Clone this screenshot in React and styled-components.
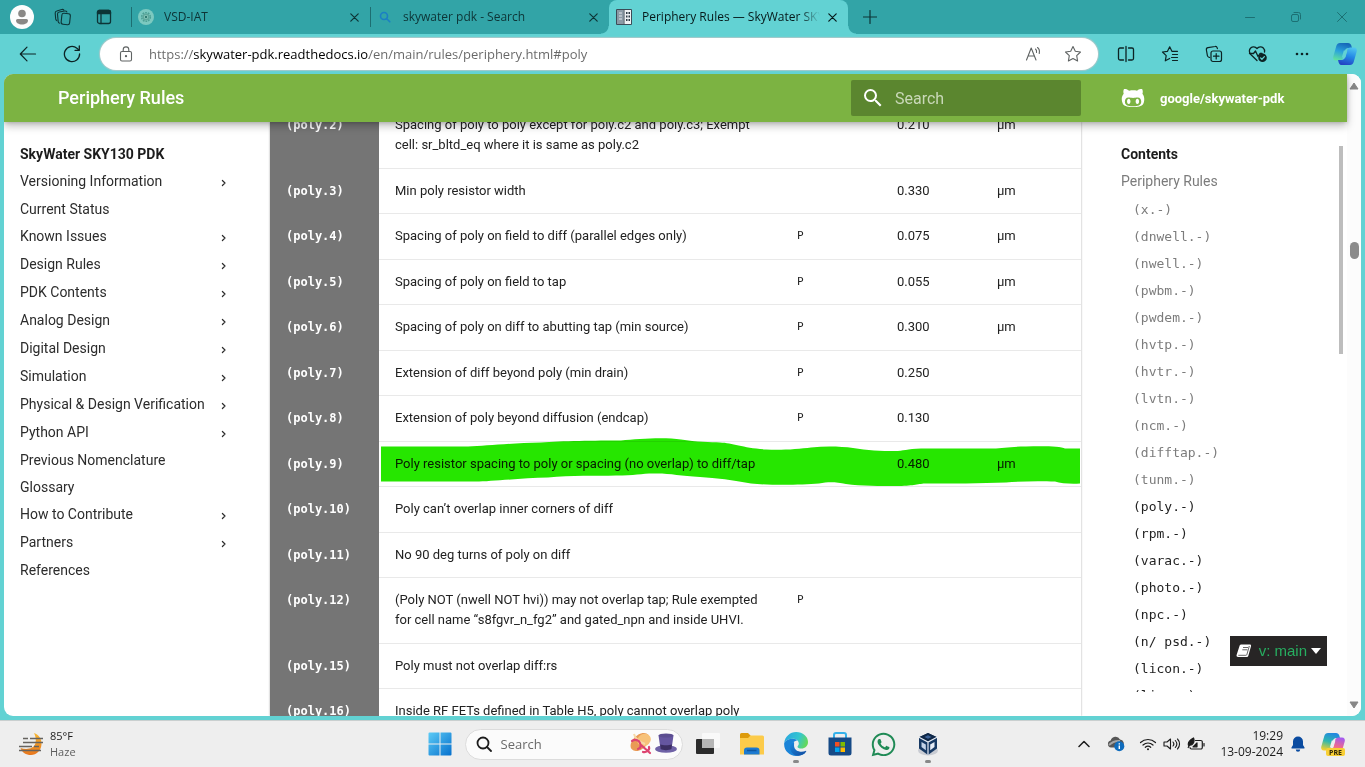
import React from "react";
import styled, { createGlobalStyle, css } from "styled-components";
import { FaGithubAlt, FaWhatsapp } from "react-icons/fa";
import { MdSearch } from "react-icons/md";

const chromeFont = '"Open Sans", "Noto Sans", sans-serif';
const docFont = 'Roboto, "Liberation Sans", sans-serif';
const monoFont = '"DejaVu Sans Mono", "Liberation Mono", monospace';

const Global = createGlobalStyle`
  *, *::before, *::after { box-sizing: border-box; }
  body { margin: 0; font-family: ${docFont}; background: #62d2d3; }
  button, input { font: inherit; color: inherit; }
  a { color: inherit; text-decoration: none; }
  ul { list-style: none; margin: 0; padding: 0; }
  svg { display: block; flex: none; }
`;

const Desktop = styled.div`
  display: flex;
  flex-direction: column;
  height: 100vh;
  overflow: hidden;
`;

/* ---------- browser chrome ---------- */

const TabStrip = styled.header`
  display: flex;
  flex: none;
  height: 34px;
  background: #32a4a7;
  color: #0d3436;
  font: 12px/16px ${chromeFont};
`;

const PlainButton = styled.button`
  display: flex;
  align-items: center;
  justify-content: center;
  flex: none;
  width: ${(p) => p.$w || 44}px;
  padding: 0;
  border: 0;
  background: none;
`;

const WindowButton = styled(PlainButton)`
  width: 46px;
  color: #1c7073;
`;

const Tabs = styled.div`
  display: flex;
  flex: 1;
  min-width: 0;
  padding-left: 4px;
`;

const Tab = styled.div`
  position: relative;
  display: flex;
  align-items: center;
  flex: 0 1 239px;
  min-width: 0;
  padding: 0 4px 0 7px;

  ${(p) =>
    p.$active
      ? css`
          color: #06191a;
          background: #62d2d3;
          border-radius: 8px 8px 0 0;
          &::before,
          &::after {
            content: "";
            position: absolute;
            bottom: 0;
            width: 8px;
            height: 8px;
          }
          &::before {
            right: 100%;
            background: radial-gradient(circle at 0 0, transparent 7px, #62d2d3 8px);
          }
          &::after {
            left: 100%;
            background: radial-gradient(circle at 100% 0, transparent 7px, #62d2d3 8px);
          }
        `
      : css`
          &::before {
            content: "";
            position: absolute;
            left: 0;
            top: 7px;
            width: 1px;
            height: 20px;
            background: #1d6e71;
          }
        `}
`;

const TabTitle = styled.span`
  flex: 1;
  min-width: 0;
  margin-left: 10px;
  overflow: hidden;
  white-space: nowrap;
  mask-image: linear-gradient(90deg, #000 calc(100% - 20px), transparent);
`;

const Spacer = styled.div`
  flex: 1;
`;

const ToolBar = styled.div`
  display: flex;
  flex: none;
  height: 40px;
  padding: 4px 0 4px 6px;
  background: #62d2d3;
  color: #0c2324;
`;

const AddressBar = styled.form`
  display: flex;
  align-items: center;
  flex: 1;
  min-width: 0;
  margin: 0 6px;
  padding: 0 5px 0 6px;
  border-radius: 16px;
  background: #fff;
  box-shadow: 0 0 1px 1px #a9c9ca;
  color: #5f6363;
`;

const AddressInput = styled.input`
  flex: 1;
  min-width: 0;
  padding: 0;
  margin-left: 3px;
  border: 0;
  outline: 0;
  font: 13px/20px ${chromeFont};
  color: #666;
  background: linear-gradient(90deg, #666 45px, #000 45px, #000 220px, #666 220px);
  background-clip: text;
  -webkit-text-fill-color: transparent;
`;

/* ---------- page ---------- */

const Viewport = styled.div`
  position: relative;
  display: flex;
  flex: 1;
  min-height: 0;
  margin: 0 4px 4px;
  border-radius: 9px;
  overflow: hidden;
  background: #fff;
`;

const Page = styled.div`
  display: flex;
  flex-direction: column;
  flex: 1;
  min-width: 0;
`;

const PageHeader = styled.header`
  position: relative;
  z-index: 1;
  display: flex;
  align-items: center;
  flex: none;
  height: 48px;
  padding-left: 54px;
  background: #7cb342;
  color: #fff;
  box-shadow: 0 0 4px rgba(0, 0, 0, 0.2), 0 4px 8px rgba(0, 0, 0, 0.25);
`;

const PageTitle = styled.a`
  flex: 1;
  font-size: 18px;
  font-weight: 500;
  line-height: 24px;
`;

const SearchBox = styled.label`
  display: flex;
  align-items: center;
  width: 230px;
  height: 36px;
  padding: 0 10px;
  gap: 10px;
  border-radius: 2px;
  background: #5b862f;
  font-size: 16px;
  svg { width: 24px; height: 24px; stroke: #fff; }
`;

const SearchInput = styled.input`
  flex: 1;
  min-width: 0;
  padding: 0;
  border: 0;
  outline: 0;
  background: none;
  &::placeholder { color: #c9d8b8; opacity: 1; }
`;

const RepoLink = styled.a`
  display: flex;
  align-items: center;
  width: 266px;
  padding-left: 40px;
  gap: 15px;
  font-size: 13px;
  font-weight: 700;
`;

const Columns = styled.div`
  display: flex;
  flex: 1;
  min-height: 0;
`;

const SideNav = styled.nav`
  flex: none;
  width: 266px;
  padding: 19px 43px 0 16px;
  font-size: 14px;
  line-height: 27px;
  color: #2c2c2c;
`;

const SideTitle = styled.strong`
  display: block;
  font-weight: 700;
  color: #1c1c1c;
`;

const NavItem = styled.li`
  display: flex;
  justify-content: space-between;
  align-items: flex-start;
  height: ${(p) => (p.$branch ? 28 : 27)}px;
  white-space: nowrap;
  svg { margin-top: 11px; }
`;

const Article = styled.main`
  flex: 1;
  min-width: 0;
  overflow: hidden;
  box-shadow: 0 0 2px rgba(0, 0, 0, 0.35);
`;

const RuleTable = styled.table`
  width: 100%;
  margin-top: -20px;
  border-collapse: separate;
  border-spacing: 0;
  table-layout: fixed;
  font-size: 13px;
  line-height: 20px;
  color: #222;
`;

const Col = styled.col`
  width: ${(p) => p.$w}px;
`;

const Rule = styled.tr`
  position: relative;
  &:nth-child(even) > * { padding-bottom: 12px; }
`;

const RuleName = styled.th`
  padding: 13px 16px;
  background: #757575;
  color: #fff;
  font: 700 12px/20px ${monoFont};
  text-align: left;
  vertical-align: top;
`;

const Cell = styled.td`
  padding: 12px 16px 13px;
  border-top: 1px solid #e9e9e9;
  vertical-align: top;
`;

const FlagCell = styled(Cell)`
  font: 11px/20px ${monoFont};
`;

const Marker = styled.svg`
  position: absolute;
  left: 111px;
  top: -4px;
  width: calc(100% - 112px);
  height: 50px;
  mix-blend-mode: multiply;
  pointer-events: none;
`;

const Toc = styled.aside`
  display: flex;
  flex: none;
  width: 266px;
  padding: 0 4px 0 40px;
  margin-bottom: 24px;
  overflow: hidden;
  font-size: 14px;
  line-height: 27px;
  color: #7c7c7c;
`;

const TocBody = styled.div`
  flex: 1;
  padding-top: 19px;
`;

const TocTop = styled.a`
  display: block;
  height: 28px;
`;

const TocItem = styled.li`
  height: 27px;
  padding-left: 12px;
  font: 13px/27px ${monoFont};
  color: ${(p) => (p.$seen ? "#7c7c7c" : "#222")};
`;

const TocThumb = styled.div`
  width: 4px;
  height: 208px;
  margin-top: 24px;
  background: #bdbdbd;
`;

const ScrollRail = styled.div`
  display: flex;
  flex-direction: column;
  align-items: center;
  flex: none;
  width: 14px;
  padding: 8px 0 7px;
  background: #fcfcfc;
`;

const ScrollThumb = styled.div`
  width: 9px;
  height: 17px;
  margin-top: 152px;
  border-radius: 5px;
  background: #8b8b8b;
`;

const VersionBadge = styled.button`
  position: absolute;
  right: 34px;
  bottom: 50px;
  display: flex;
  align-items: center;
  height: 30px;
  padding: 0 6px;
  border: 0;
  background: #272525;
  color: #27ae60;
  font: 15px/20px "Liberation Sans", sans-serif;
  white-space: nowrap;
  span { margin: 0 4px 0 7px; }
`;

/* ---------- taskbar ---------- */

const TaskBar = styled.footer`
  display: grid;
  grid-template-columns: 1fr auto 1fr;
  flex: none;
  height: 47px;
  border-top: 1px solid #c9cfcf;
  background: #eee;
  color: #1c1c1c;
  font: 12px/16px ${chromeFont};
`;

const Weather = styled.button`
  display: flex;
  align-items: center;
  justify-self: start;
  gap: 7px;
  padding: 0 19px;
  border: 0;
  background: none;
  font-size: 11px;
  text-align: left;
  span { display: block; }
  span + span { color: #5d5d5d; }
`;

const Apps = styled.div`
  display: flex;
  padding-left: 2px;
`;

const TaskSearch = styled.label`
  display: flex;
  align-items: center;
  align-self: center;
  width: 218px;
  height: 31px;
  margin: 0 3px;
  padding: 0 4px 0 10px;
  gap: 9px;
  border: 1px solid #dcdcdc;
  border-radius: 16px;
  background: #fbfbfb;
  font-size: 13px;
  color: #1c1c1c;
  input::placeholder { color: #6a6a6a; }
`;

const AppButton = styled(PlainButton)`
  position: relative;
  ${(p) =>
    p.$running &&
    css`
      &::after {
        content: "";
        position: absolute;
        bottom: 4px;
        left: 19px;
        width: 6px;
        height: 3px;
        border-radius: 2px;
        background: #888;
      }
    `}
`;

const Tray = styled.div`
  display: flex;
  justify-content: flex-end;
  padding-right: 10px;
`;

const TrayGroup = styled.button`
  display: flex;
  align-items: center;
  gap: 6px;
  margin: 0 12px 0 4px;
  padding: 0 3px;
  border: 0;
  background: none;
`;

const Clock = styled.button`
  padding: 0 2px 0 0;
  border: 0;
  background: none;
  text-align: right;
  time { display: block; }
`;

/* ---------- drawings ---------- */

const Line = ({ w = 20, h, sw = 1, children, ...rest }) => (
  <svg width={w} height={h || w} viewBox={`0 0 ${w} ${h || w}`} fill="none" stroke="currentColor" strokeWidth={sw} strokeLinecap="round" strokeLinejoin="round" aria-hidden="true" {...rest}>
    {children}
  </svg>
);

const Avatar = () => (
  <svg width="24" height="24" viewBox="0 0 24 24" aria-hidden="true">
    <circle cx="12" cy="12" r="12" fill="#fdfdfd" />
    <circle cx="12" cy="8.5" r="3.8" fill="#8a8886" />
    <path d="M6 15.5a1.500 1.500 0 0 1 1.500-1.500h9a1.500 1.500 0 0 1 1.500 1.500c0 2.400-2.600 4-6 4s-6-1.600-6-4z" fill="#8a8886" />
  </svg>
);

const WorkspacesIcon = () => (
  <Line w={18} sw={1.100}>
    <rect x="7.500" y="5.500" width="8.500" height="11" rx="2" transform="rotate(6 12 11)" />
    <path d="M5.600 15.200c-.8-.2-1.300-.8-1.400-1.600L3.500 6.200c-.1-1.100.6-2 1.700-2.200l5.600-1c1-.1 1.800.3 2.100 1" />
    <path d="M2.800 12.600c-.7-.5-1-1-1.100-1.700L1.200 5.200C1.100 4 1.800 3.200 2.800 3l5-1.500c.9-.2 1.600 0 2.100.6" />
  </Line>
);

const TabActionsIcon = () => (
  <Line w={16} sw={1.300}>
    <rect x="1.500" y="1.500" width="13" height="13" rx="2" />
    <path d="M1.500 3a1.500 1.500 0 0 1 1.500-1.500h10A1.500 1.500 0 0 1 14.500 3v1.500h-13z" fill="currentColor" />
    <path d="M5 5v9.500" />
  </Line>
);

const CloseIcon = () => (
  <Line w={9} sw={1.200}><path d="m.8.8 7.400 7.400M8.200.8.8 8.200" /></Line>
);

const VsdIcon = () => (
  <svg width="16" height="16" viewBox="0 0 16 16" aria-hidden="true">
    <circle cx="8" cy="8" r="8" fill="#7cc9c0" />
    <circle cx="8" cy="8" r="4.300" fill="none" stroke="#4c9f94" strokeWidth="1.600" strokeDasharray="1.700 1" />
    <circle cx="8" cy="8" r="3.600" fill="#5fa89c" />
    <circle cx="8" cy="8" r="2" fill="#8fcdc0" />
    <circle cx="8" cy="8" r="1.200" fill="#2f7a70" />
  </svg>
);

const BlueSearchIcon = () => (
  <Line w={16} sw={1.600} style={{ color: "#1b7fc4" }}>
    <circle cx="7" cy="7" r="3.500" /><path d="m9.700 9.700 3.100 3.100" />
  </Line>
);

const DocsIcon = () => (
  <svg width="16" height="16" viewBox="0 0 16 16" aria-hidden="true">
    <path d="M.5.500h15v15H.5z" fill="#eef1f3" stroke="#3b4b57" />
    <path d="M1 1h6.500v14H1z" fill="#8b9aa5" />
    <path d="M7.500.500h1v15h-1z" fill="#3b4b57" />
    <path d="M3 4h3M3 7h3M3 10h3" stroke="#dfe5e9" />
    <path d="M10 4h1.500M12.500 4H14M10 7.500h1.500M12.500 7.500H14M10 11h1.500M12.500 11H14" stroke="#2d3a44" strokeWidth="1.800" />
  </svg>
);

const BackIcon = () => (
  <Line w={18} sw={1.200}><path d="M16.500 9H1.500M8 2.200 1.300 9 8 15.800" /></Line>
);
const ReloadIcon = () => (
  <Line w={18} sw={1.300}>
    <path d="M16.600 9a7.600 7.600 0 1 1-2.700-5.800l2 1.800" /><path d="M16.300 1v4.300H12" />
  </Line>
);
const LockIcon = () => (
  <Line w={14} h={16} sw={1.100}>
    <rect x="1.500" y="5.500" width="11" height="9.500" rx="1.500" />
    <path d="M4.200 5.500V3.700a2.800 2.800 0 0 1 5.600 0v1.800" />
    <circle cx="7" cy="10.200" r=".6" fill="currentColor" />
  </Line>
);
const ReadAloudIcon = () => (
  <Line w={18} sw={1.100}>
    <path d="m2.500 15 4.700-12L12 15M4 11h6.500" />
    <path d="M11.500 4c1 .9 1.300 2 1 3.500M13.500 2.500c1.900 1.500 2.300 3.600 1.700 6" />
  </Line>
);
const starPath = "m9 1.500 2.300 4.800 5.200.7-3.800 3.700.9 5.300L9 13.500 4.400 16l.9-5.300L1.500 7l5.200-.7z";
const StarIcon = () => <Line w={18} sw={1.100}><path d={starPath} /></Line>;
const SplitIcon = () => (
  <Line w={18} sw={1.300}>
    <path d="M6.500 3H3a1.500 1.500 0 0 0-1.500 1.500v9A1.500 1.500 0 0 0 3 15h3.500M11.500 3H15a1.500 1.500 0 0 1 1.500 1.500v9A1.500 1.500 0 0 1 15 15h-3.500M9 1.500v15" />
  </Line>
);
const FavoritesIcon = () => (
  <Line w={18} sw={1.200}>
    <path d="M5.200 10.600 1.500 7l5-.7L8.700 1.800l2.200 4.500H16.500M5.200 10.600l-.9 5.200 4.400-2.300" />
    <path d="M11.500 9.500h5M10.500 12.500h6M11.500 15.500h5" />
  </Line>
);
const CollectionsIcon = () => (
  <Line w={18} sw={1.200}>
    <rect x="6" y="6" width="10.500" height="10.500" rx="2" />
    <path d="M11.200 8.500v5.500M8.500 11.200H14" />
    <path d="M4.600 12.500 3.500 12c-.6-.3-.9-.8-1.100-1.400L1.400 5c-.2-1.100.5-2.100 1.600-2.300l7-1.200c1-.2 1.900.3 2.200 1.300l.2.800" />
  </Line>
);
const EssentialsIcon = () => (
  <Line w={20} h={18} sw={1.300}>
    <path d="m9 15.500-6.200-6C.8 7.400 1 4.600 2.700 3 4.500 1.300 7.200 1.500 9 3.500c1.800-2 4.500-2.200 6.300-.5 1.100 1.100 1.500 2.600 1.200 4" />
    <path d="M1.500 8.500h4L7.500 6l2.500 5.500L12 8.500h2" />
    <circle cx="14.500" cy="12.800" r="4.300" fill="#0c2324" stroke="none" />
    <path d="m12.600 12.900 1.300 1.300 2.500-2.600" stroke="#62d2d3" />
  </Line>
);
const DotsIcon = () => (
  <Line w={14} h={4} stroke="none" fill="currentColor">
    <circle cx="2" cy="2" r="1.300" /><circle cx="7" cy="2" r="1.300" /><circle cx="12" cy="2" r="1.300" />
  </Line>
);

const CopilotIcon = ({ pre }) => {
  const id = pre ? "cp" : "ct";
  return (
    <svg width="26" height="26" viewBox="0 0 26 26" aria-hidden="true">
      <defs>
        <linearGradient id={`${id}a`} x1=".6" y1="0" x2=".3" y2="1">
          <stop offset="0" stopColor={pre ? "#2287e0" : "#1566b8"} />
          <stop offset=".5" stopColor={pre ? "#2fb7b0" : "#2aa2dc"} />
          <stop offset="1" stopColor={pre ? "#f3d02c" : "#5fe0a0"} />
        </linearGradient>
        <linearGradient id={`${id}b`} x1=".7" y1="0" x2=".4" y2="1">
          <stop offset="0" stopColor={pre ? "#a45af0" : "#4fc3f0"} />
          <stop offset=".5" stopColor={pre ? "#ee6a8e" : "#2387e6"} />
          <stop offset="1" stopColor={pre ? "#f7a65a" : "#2343c4"} />
        </linearGradient>
      </defs>
      <path d="M8 2h8c1.800 0 2.800 1 3.300 2.600L20 7h-3.500c-2 0-3 .8-3.600 2.700l-2 7C10.300 18.500 9.300 19.500 7.500 19.500H4C1.600 19.500.7 17.700 1.300 15.500l3-10.500C4.900 3 6.200 2 8 2z" fill={`url(#${id}a)`} />
      <path d="M18 24h-8c-1.800 0-2.800-1-3.300-2.600L6 19h3.500c2 0 3-.8 3.600-2.700l2-7C15.700 7.500 16.700 6.500 18.500 6.500H22c2.400 0 3.300 1.800 2.700 4l-3 10.500c-.6 2-1.900 3-3.700 3z" fill={`url(#${id}b)`} />
      <path d="M11.800 9.500h3.600l-2 7H9.800z" fill={pre ? "#eee" : "#62d2d3"} />
      {pre && <rect x="6" y="17" width="19" height="8" rx="2" fill="#f8cf35" />}
      {pre && <text x="15.500" y="23.500" textAnchor="middle" fontFamily="Open Sans, sans-serif" fontWeight="700" fontSize="7" fill="#2d2508">PRE</text>}
    </svg>
  );
};

const ChevronIcon = () => (
  <Line w={6} h={8} sw={1.200}><path d="m1.400 1.500 2.600 2.500-2.600 2.500" /></Line>
);

const Triangle = ({ down }) => (
  <svg width="10" height="8" viewBox="0 0 10 8" aria-hidden="true">
    <path d={down ? "M1 1h8L5 7z" : "M1 7h8L5 1z"} fill="#868686" stroke="#868686" strokeLinejoin="round" />
  </svg>
);

const BookIcon = () => (
  <svg width="16" height="14" viewBox="0 0 16 14" aria-hidden="true">
    <path d="M5.400.5h8.200c1.200 0 1.700.7 1.400 1.700l-2.600 9.300c-.3 1.100-.9 1.500-1.900 1.500H2.200C.9 13 .3 12 .6 11L3.500 2C3.800 1 4.400.5 5.400.5z" fill="#fff" />
    <path d="M7 3.500h5M6.300 5.800h5M2.300 11.300h7.500c.6 0 .9-.2 1.100-.8L13.300 2" fill="none" stroke="#272525" strokeWidth=".7" />
  </svg>
);

const HazeIcon = () => (
  <svg width="24" height="24" viewBox="0 0 24 24" aria-hidden="true">
    <defs>
      <linearGradient id="haze" x1="0" y1="0" x2="0" y2="1"><stop offset="0" stopColor="#f7b733" /><stop offset="1" stopColor="#e8761c" /></linearGradient>
    </defs>
    <path d="M15 1c5 2 8 6 7.500 11.500C22 18.500 17.500 23 12 23c-5 0-9-2.500-10.500-7 6 2 13.500 1 15-5 .8-3.500 0-7-1.500-10z" fill="url(#haze)" />
    <path d="M4 6.500h5M11 6.500h13M4 10.500h20M0 14.500h13M15 14.500h5M0 18.500h22" stroke="#66635f" strokeWidth="1.700" />
  </svg>
);

const StartIcon = () => (
  <svg width="24" height="24" viewBox="0 0 24 24" aria-hidden="true">
    <defs>
      <linearGradient id="win" x1="0" y1="0" x2="1" y2="1"><stop offset="0" stopColor="#5ccbf6" /><stop offset="1" stopColor="#0670cd" /></linearGradient>
    </defs>
    <path d="M1.500.500h10v11h-11v-10a1 1 0 0 1 1-1zM12.500.500h10a1 1 0 0 1 1 1v10h-11zM.5 12.500h11v11h-10a1 1 0 0 1-1-1zM12.500 12.500h11v10a1 1 0 0 1-1 1h-10z" fill="url(#win)" />
  </svg>
);

const HatsIcon = () => (
  <svg width="48" height="24" viewBox="0 0 48 24" aria-hidden="true">
    <ellipse cx="10" cy="10" rx="11" ry="7" transform="rotate(-42 10 10)" fill="#e99a55" />
    <ellipse cx="14" cy="8" rx="7" ry="6" transform="rotate(-30 14 8)" fill="#f7c27a" />
    <path d="M4 2c1 4 5 8 11 10" stroke="#f6d9a8" strokeWidth="2" fill="none" />
    <path d="M2 9c3-2 7-1 8 2s1 5-2 6M11 13l9 8M19 15c1 3-3 6-6 5" stroke="#dd4470" strokeWidth="2.200" fill="none" strokeLinecap="round" />
    <ellipse cx="36" cy="17" rx="11" ry="3.800" fill="#6f62a6" />
    <path d="M28.500 3.500h15l-2 13.500c-3 1.500-8 1.500-11 0z" fill="#6556a0" />
    <path d="M30.200 12.500c3 1 8.500 1 11.800 0l-.6 4.500c-3 1.500-8 1.500-10.700 0z" fill="#3c2f63" />
    <ellipse cx="36" cy="3.500" rx="7.500" ry="2" fill="#5b4d90" />
  </svg>
);

const TaskViewIcon = () => (
  <svg width="24" height="24" viewBox="0 0 24 24" aria-hidden="true">
    <rect y="7" width="18" height="15" rx="1" fill="#2b2b2b" />
    <rect x="6" y="1" width="18" height="15" rx="1" fill="#fafafa" fillOpacity=".85" />
    <rect x="6" y="7" width="12" height="9" fill="#b6b6b6" />
  </svg>
);

const FolderIcon = () => (
  <svg width="24" height="24" viewBox="0 0 24 24" aria-hidden="true">
    <path d="M0 2.500A1.500 1.500 0 0 1 1.500 1H8l3 3h12v8H0z" fill="#dd9b0c" />
    <path d="M0 6h8l2.500-2.500H22.500A1.500 1.500 0 0 1 24 5v17.500H0z" fill="#fccb4a" />
    <path d="M4 18.500a3 3 0 0 1 3-3h9.500a3 3 0 0 1 3 3V22.500H4z" fill="#1c7ad0" />
    <path d="M7 18.500h9.500" stroke="#0e569f" strokeWidth="1.500" />
  </svg>
);

const EdgeIcon = () => (
  <svg width="24" height="24" viewBox="0 0 24 24" aria-hidden="true">
    <defs>
      <linearGradient id="edgeTop" x1="0" y1=".2" x2="1" y2=".5"><stop offset="0" stopColor="#2aa6e0" /><stop offset=".6" stopColor="#34c6cf" /><stop offset="1" stopColor="#64d85a" /></linearGradient>
      <linearGradient id="edgeLow" x1="0" y1="0" x2="1" y2="1"><stop offset="0" stopColor="#1a8ae0" /><stop offset="1" stopColor="#11489c" /></linearGradient>
    </defs>
    <path d="M.2 11C.9 4.700 6 0 12.200 0 18.800 0 24 4.500 24 10c0 4-3 6.500-6.500 6.500-2.500 0-4-.8-4-1.800 0-.8 1.300-1.200 1.300-3.200 0-2.500-2.400-4.700-6-4.700C4.500 6.800 1.500 8.500.2 11z" fill="url(#edgeTop)" />
    <path d="M.2 11C1.500 8.500 4.500 6.800 8.800 6.800c2 0 3.600.7 4.700 1.800-3 0-5.500 2.200-5.500 5.600 0 4.800 4.500 7.500 9 7.500 1.800 0 3.500-.6 5-1.500C20 22.500 16 24 12 24 5.400 24-.6 18.300.2 11z" fill="#1b84d8" />
    <path d="M10 9.800C7 11 5.800 13.500 6.200 16.500c.5 4 4 7.300 8 7.200 3.400-.3 6.300-1.800 8-4.200.3-.5-.1-.9-.6-.6-4.600 2-11.600.4-11.600-5.700 0-1.200.3-2.300 0-3.400z" fill="url(#edgeLow)" />
  </svg>
);

const StoreIcon = () => (
  <svg width="24" height="24" viewBox="0 0 24 24" aria-hidden="true">
    <path d="M6 7V3a2 2 0 0 1 2-2h8a2 2 0 0 1 2 2v4" fill="none" stroke="#35b1ea" strokeWidth="2" />
    <path d="M.500 5.500h23V21a2.500 2.500 0 0 1-2.500 2.500H3A2.500 2.500 0 0 1 .500 21z" fill="#164a86" />
    <path d="M7 10h4.500v4.500H7z" fill="#f25022" /><path d="M12.500 10H17v4.500h-4.500z" fill="#7fba00" />
    <path d="M7 15.500h4.500V20H7z" fill="#00a4ef" /><path d="M12.500 15.500H17V20h-4.500z" fill="#ffb900" />
  </svg>
);

const VBoxIcon = () => (
  <svg width="22" height="24" viewBox="0 0 22 24" aria-hidden="true">
    <ellipse cx="11" cy="18.500" rx="10" ry="5" fill="#c9ccd3" />
    <path d="M11 1 20 5.200v11.300L11 23 2 16.500V5.200z" fill="#173963" />
    <path d="M11 1 20 5.200 11 10 2 5.200z" fill="#0f2747" />
    <path d="M2 5.200 11 10l9-4.800M11 10v13" stroke="#e6ecf5" strokeWidth="1.200" fill="none" />
    <path d="m4.500 10 4.300 2.500v5.800L4.500 15z" fill="#c4d3e8" />
    <path d="m17.500 10-4.300 2.500v5.800l4.300-3.300z" fill="#e6ecf5" />
    <path d="m7.500 4.900 3.500-1.700 3.500 1.700L11 6.800z" fill="#3d639a" />
  </svg>
);

const CloudIcon = () => (
  <svg width="18" height="16" viewBox="0 0 18 16" aria-hidden="true">
    <path d="M4 11.500a3.500 3.500 0 0 1-.3-6.900A5 5 0 0 1 13 3.500a4 4 0 0 1 2.500 7l-4 1z" fill="#565656" />
    <path d="M2 9c2-2 6-4.500 11-4" stroke="#a5a5a5" strokeWidth="2" fill="none" />
    <circle cx="12.300" cy="10.300" r="5" fill="#0f6cbd" />
    <path d="M12.300 9.500v3.500M12.300 7.200v1.200" stroke="#fff" strokeWidth="1.400" />
  </svg>
);

const WifiIcon = () => (
  <Line w={18} h={14} sw={1.200}>
    <path d="M1.500 5.500c4.300-4 10.700-4 15 0M4 8c3-2.700 7-2.700 10 0M6.300 10.300c1.600-1.400 3.800-1.400 5.400 0" />
    <circle cx="9" cy="12.300" r="1" fill="currentColor" stroke="none" />
  </Line>
);
const VolumeIcon = () => (
  <Line w={18} h={14} sw={1.100}>
    <path d="M1 5h3l3.500-3v10L4 9H1zM10 5c.9 1 .9 3 0 4M12.300 3.500c1.800 2 1.800 5 0 7M14.500 2c2.700 2.800 2.700 7.200 0 10" />
  </Line>
);
const BatteryIcon = () => (
  <Line w={18} h={14} sw={1.200}>
    <path d="M8.500 3.500h5.300a1.500 1.500 0 0 1 1.500 1.500v5.500a1.500 1.500 0 0 1-1.500 1.500H4.500A1.500 1.500 0 0 1 3 10.500" />
    <path d="M17 6.500V9" />
    <path d="m6 9.800 4-4v4z" fill="currentColor" />
    <path d="M1.500 8.200C.5 5 3 3 6.500 1 8 4.500 6 8.500 2.500 8.200L1.200 10.500" fill="currentColor" />
  </Line>
);
const BellIcon = () => (
  <svg width="14" height="16" viewBox="0 0 14 16" aria-hidden="true">
    <path d="M7 .500a5 5 0 0 1 5 5V9l1.500 2.500c.2.500 0 1-.6 1H1.100c-.6 0-.8-.5-.6-1L2 9V5.500a5 5 0 0 1 5-5zM4.800 13.500h4.400a2.200 2.200 0 0 1-4.400 0z" fill="#0a4ba0" />
  </svg>
);

/* ---------- content ---------- */

const navItems = [
  ["Versioning Information", true], ["Current Status"], ["Known Issues", true], ["Design Rules", true],
  ["PDK Contents", true], ["Analog Design", true], ["Digital Design", true], ["Simulation", true],
  ["Physical & Design Verification", true], ["Python API", true], ["Previous Nomenclature"], ["Glossary"],
  ["How to Contribute", true], ["Partners", true], ["References"],
];

const rules = [
  ["(poly.2)", "Spacing of poly to poly except for poly.c2 and poly.c3; Exempt cell: sr_bltd_eq where it is same as poly.c2", "", "0.210", "µm"],
  ["(poly.3)", "Min poly resistor width", "", "0.330", "µm"],
  ["(poly.4)", "Spacing of poly on field to diff (parallel edges only)", "P", "0.075", "µm"],
  ["(poly.5)", "Spacing of poly on field to tap", "P", "0.055", "µm"],
  ["(poly.6)", "Spacing of poly on diff to abutting tap (min source)", "P", "0.300", "µm"],
  ["(poly.7)", "Extension of diff beyond poly (min drain)", "P", "0.250", ""],
  ["(poly.8)", "Extension of poly beyond diffusion (endcap)", "P", "0.130", ""],
  ["(poly.9)", "Poly resistor spacing to poly or spacing (no overlap) to diff/tap", "", "0.480", "µm"],
  ["(poly.10)", "Poly can’t overlap inner corners of diff", "", "", ""],
  ["(poly.11)", "No 90 deg turns of poly on diff", "", "", ""],
  ["(poly.12)", "(Poly NOT (nwell NOT hvi)) may not overlap tap; Rule exempted for cell name “s8fgvr_n_fg2” and gated_npn and inside UHVI.", "P", "", ""],
  ["(poly.15)", "Poly must not overlap diff:rs", "", "", ""],
  ["(poly.16)", "Inside RF FETs defined in Table H5, poly cannot overlap poly", "", "", ""],
];

const tocSeen = ["(x.-)", "(dnwell.-)", "(nwell.-)", "(pwbm.-)", "(pwdem.-)", "(hvtp.-)", "(hvtr.-)", "(lvtn.-)", "(ncm.-)", "(difftap.-)", "(tunm.-)"];
const tocNext = ["(poly.-)", "(rpm.-)", "(varac.-)", "(photo.-)", "(npc.-)", "(n/ psd.-)", "(licon.-)", "(li.-.-)"];

const markerPath =
  "M0 9.500H87C105 9 130 6 160 5.500C180 4 215 3.500 240 3.500C258 1.500 285 0 300 2.500C315 5 330 5 339 5.500C352 6 362 11 385 12.500C400 13.500 418 12 430 10.500C445 9 460 9.500 472 11C486 13.500 500 14 514 14C522 14 526 12 540 11.500H612C622 11 630 9.500 645 9.500C660 9 680 9 684 11.500H699V46.500C690 47 680 46.500 674 44.500C660 44 640 44 625 45.500C600 46.500 570 46.500 544 46.500C536 47 532 49 515 49C500 49 480 49 465 47C455 45 448 44.500 438 46.500C420 48 390 48.500 370 46.500C352 43 335 41 319 40C300 39 290 36.500 276 36.500C262 36 255 38.500 235 38.500C215 39 190 38 167 40.500C140 41 110 44.500 95 44.500H0Z";

const BrowserTab = ({ icon, title, active }) => (
  <Tab $active={active}>
    {icon}
    <TabTitle>{title}</TabTitle>
    <PlainButton $w={24} aria-label={`Close ${title}`}><CloseIcon /></PlainButton>
  </Tab>
);

export default function App() {
  return (
    <Desktop>
      <Global />
      <TabStrip>
        <PlainButton aria-label="Profile"><Avatar /></PlainButton>
        <PlainButton $w={37} aria-label="Workspaces"><WorkspacesIcon /></PlainButton>
        <PlainButton $w={46} aria-label="Tab actions"><TabActionsIcon /></PlainButton>
        <Tabs>
          <BrowserTab icon={<VsdIcon />} title="VSD-IAT" />
          <BrowserTab icon={<BlueSearchIcon />} title="skywater pdk - Search" />
          <BrowserTab active icon={<DocsIcon />} title="Periphery Rules — SkyWater SKY130" />
          <PlainButton aria-label="New tab"><Line w={14} sw={1.200}><path d="M7 .5v13M.5 7h13" /></Line></PlainButton>
        </Tabs>
        <WindowButton aria-label="Minimize"><Line w={10}><path d="M.5 5.500h9" /></Line></WindowButton>
        <WindowButton aria-label="Restore">
          <Line w={10}><rect x=".5" y="2.500" width="7" height="7" rx="1.500" /><path d="M3 .500h4.500a2 2 0 0 1 2 2V7" /></Line>
        </WindowButton>
        <WindowButton aria-label="Close window"><Line w={10}><path d="m.5.5 9 9M9.500.5l-9 9" /></Line></WindowButton>
      </TabStrip>

      <ToolBar>
        <PlainButton aria-label="Back"><BackIcon /></PlainButton>
        <PlainButton aria-label="Refresh"><ReloadIcon /></PlainButton>
        <AddressBar>
          <PlainButton $w={40} type="button" aria-label="Site information"><LockIcon /></PlainButton>
          <AddressInput aria-label="Address" defaultValue="https://skywater-pdk.readthedocs.io/en/main/rules/periphery.html#poly" />
          <PlainButton $w={40} type="button" aria-label="Read aloud"><ReadAloudIcon /></PlainButton>
          <PlainButton $w={40} type="button" aria-label="Add to favorites"><StarIcon /></PlainButton>
        </AddressBar>
        <PlainButton aria-label="Split screen"><SplitIcon /></PlainButton>
        <PlainButton aria-label="Favorites"><FavoritesIcon /></PlainButton>
        <PlainButton aria-label="Collections"><CollectionsIcon /></PlainButton>
        <PlainButton aria-label="Browser essentials"><EssentialsIcon /></PlainButton>
        <PlainButton aria-label="Settings and more"><DotsIcon /></PlainButton>
        <PlainButton $w={41} aria-label="Copilot"><CopilotIcon /></PlainButton>
      </ToolBar>

      <Viewport>
        <Page>
          <PageHeader>
            <PageTitle href="#top">Periphery Rules</PageTitle>
            <SearchBox>
              <MdSearch aria-hidden="true" />
              <SearchInput type="text" aria-label="Search documentation" placeholder="Search" />
            </SearchBox>
            <RepoLink href="#repo"><FaGithubAlt size={24} aria-hidden="true" />google/skywater-pdk</RepoLink>
          </PageHeader>
          <Columns>
            <SideNav aria-label="Documentation">
              <SideTitle>SkyWater SKY130 PDK</SideTitle>
              <ul>
                {navItems.map(([label, branch]) => (
                  <NavItem key={label} $branch={branch}>
                    <a href="#nav">{label}</a>
                    {branch && <ChevronIcon />}
                  </NavItem>
                ))}
              </ul>
            </SideNav>
            <Article>
              <RuleTable>
                <colgroup><Col $w={109} /><col /><Col $w={100} /><Col $w={100} /><Col $w={100} /></colgroup>
                <tbody>
                  {rules.map(([name, text, flag, value, unit]) => (
                    <Rule key={name}>
                      <RuleName scope="row">{name}</RuleName>
                      <Cell>{text}</Cell>
                      <FlagCell>{flag}</FlagCell>
                      <Cell>{value}</Cell>
                      <Cell>
                        {unit}
                        {name === "(poly.9)" && (
                          <Marker viewBox="0 0 699 50" preserveAspectRatio="none" aria-hidden="true">
                            <path d={markerPath} fill="#26e600" />
                          </Marker>
                        )}
                      </Cell>
                    </Rule>
                  ))}
                </tbody>
              </RuleTable>
            </Article>
            <Toc aria-label="Contents">
              <TocBody>
                <SideTitle>Contents</SideTitle>
                <TocTop href="#periphery">Periphery Rules</TocTop>
                <ul>
                  {tocSeen.map((t) => <TocItem key={t} $seen><a href="#rule">{t}</a></TocItem>)}
                  {tocNext.map((t) => <TocItem key={t}><a href="#rule">{t}</a></TocItem>)}
                </ul>
              </TocBody>
              <TocThumb />
            </Toc>
          </Columns>
        </Page>
        <ScrollRail>
          <Triangle />
          <ScrollThumb />
          <Spacer />
          <Triangle down />
        </ScrollRail>
        <VersionBadge>
          <BookIcon />
          <span>v: main</span>
          <svg width="10" height="6" viewBox="0 0 10 6" aria-hidden="true"><path d="M0 0h10L5 6z" fill="#fff" /></svg>
        </VersionBadge>
      </Viewport>

      <TaskBar>
        <Weather><HazeIcon /><span><span>85°F</span><span>Haze</span></span></Weather>
        <Apps>
          <AppButton aria-label="Start"><StartIcon /></AppButton>
          <TaskSearch>
            <Line w={16} sw={1.800}><circle cx="7" cy="7" r="5.500" /><path d="m11 11 4 4" /></Line>
            <SearchInput type="text" aria-label="Search Windows" placeholder="Search" />
            <HatsIcon />
          </TaskSearch>
          <AppButton aria-label="Task view"><TaskViewIcon /></AppButton>
          <AppButton aria-label="File Explorer"><FolderIcon /></AppButton>
          <AppButton aria-label="Microsoft Edge" $running><EdgeIcon /></AppButton>
          <AppButton aria-label="Microsoft Store"><StoreIcon /></AppButton>
          <AppButton aria-label="WhatsApp"><FaWhatsapp size={27} color="#1f8a55" /></AppButton>
          <AppButton aria-label="VirtualBox" $running><VBoxIcon /></AppButton>
        </Apps>
        <Tray>
          <PlainButton $w={32} aria-label="Hidden icons"><Line w={12} h={8} sw={1.500}><path d="m1 6.500 5-5 5 5" /></Line></PlainButton>
          <PlainButton $w={32} aria-label="OneDrive"><CloudIcon /></PlainButton>
          <TrayGroup aria-label="Network, volume, battery"><WifiIcon /><VolumeIcon /><BatteryIcon /></TrayGroup>
          <Clock><time>19:29</time><time>13-09-2024</time></Clock>
          <PlainButton $w={26} aria-label="Notifications"><BellIcon /></PlainButton>
          <PlainButton aria-label="Copilot preview"><CopilotIcon pre /></PlainButton>
        </Tray>
      </TaskBar>
    </Desktop>
  );
}
